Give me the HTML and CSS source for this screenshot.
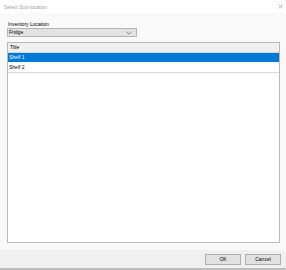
FILE: index.html
```html
<!DOCTYPE html>
<html lang="en">
<head>
    <meta charset="UTF-8">
    <title>Select Sub-location</title>
    <link rel="stylesheet" href="styles.css">
</head>
<body>
    <div class="dialog">
        <div class="titlebar">
            <span class="title">Select Sub-location</span>
            <svg class="close" width="5" height="5" viewBox="0 0 5 5">
                <path d="M0.5 0.5 L4.5 4.5 M4.5 0.5 L0.5 4.5" stroke="#8a8a8a" stroke-width="0.6"/>
            </svg>
        </div>
        <div class="content">
            <label class="field-label">Inventory Location</label>
            <div class="combo">
                <span>Fridge</span>
                <svg class="chevron" width="6" height="4" viewBox="0 0 6 4">
                    <path d="M0.5 0.8 L3 3.2 L5.5 0.8" fill="none" stroke="#707070" stroke-width="0.8"/>
                </svg>
            </div>
            <div class="listview">
                <div class="list-header">Title</div>
                <ul class="rows">
                    <li class="selected">Shelf 1</li>
                    <li>Shelf 2</li>
                </ul>
            </div>
        </div>
        <div class="footer">
            <button class="btn">OK</button>
            <button class="btn">Cancel</button>
        </div>
    </div>
</body>
</html>
```

FILE: styles.css
```css
body {
    margin: 0;
    font-family: "Liberation Sans", "DejaVu Sans", sans-serif;
    font-size: 5px;
    color: #000;
    background-color: #ffffff;
}

.dialog {
    width: 286px;
    height: 270px;
    display: flex;
    flex-direction: column;
    background-color: #f9f9f9;
}

.titlebar {
    height: 13px;
    background-color: #ffffff;
    display: flex;
    justify-content: space-between;
    align-items: center;
    padding: 0 3px 0 4px;
}

.title {
    color: #a0a0a0;
    font-size: 5px;
}

.content {
    flex: 1;
    display: flex;
    flex-direction: column;
    padding: 8px 6px 7px 7px;
}

.field-label {
    padding-left: 1px;
    height: 7px;
    line-height: 7px;
}

.combo {
    box-sizing: border-box;
    width: 130px;
    height: 9px;
    border: 1px solid #b4b4b4;
    background-color: #e3e3e3;
    display: flex;
    justify-content: space-between;
    align-items: center;
    padding: 0 4px 0 1px;
    line-height: 7px;
}

.listview {
    flex: 1;
    margin-top: 5px;
    border: 1px solid #b9b9b9;
    background-color: #ffffff;
}

.list-header {
    height: 9px;
    line-height: 9px;
    padding-left: 2px;
    background-color: #f0f0f0;
    border-bottom: 1px solid #d6d6d6;
}

.rows {
    list-style: none;
    margin: 0;
    padding: 0;
}

.rows li {
    height: 9px;
    line-height: 9px;
    padding-left: 1px;
    border-bottom: 1px solid #ffffff;
}

.rows li:last-child {
    border-bottom: 1px solid #d9d9d9;
}

.rows li.selected {
    background-color: #0078d7;
    color: #ffffff;
}

.footer {
    height: 18px;
    background-color: #f0f0f0;
    border-bottom: 2px solid #bdbdbd;
    display: flex;
    justify-content: flex-end;
    align-items: center;
    gap: 4px;
    padding-right: 5px;
}

.btn {
    width: 36px;
    height: 11px;
    padding: 0;
    font-family: inherit;
    font-size: 5px;
    color: #000;
    background-color: #e1e1e1;
    border: 1px solid #adadad;
}
```
